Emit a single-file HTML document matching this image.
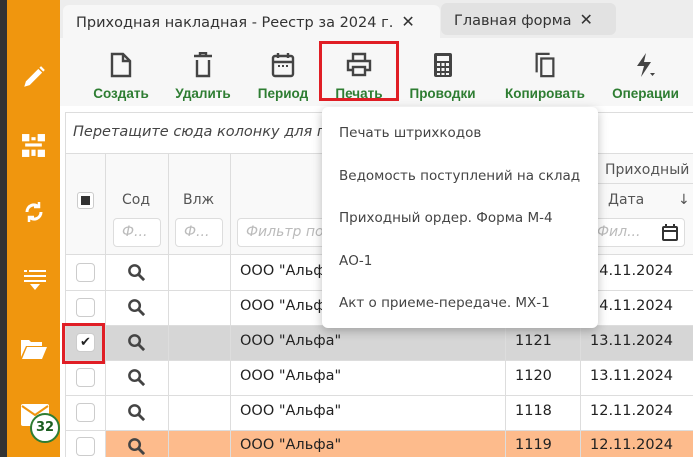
<!DOCTYPE html><html><head><meta charset="utf-8"><style>
*{box-sizing:border-box;margin:0;padding:0}
body{width:693px;height:457px;overflow:hidden;position:relative;font-family:"DejaVu Sans","Liberation Sans",sans-serif;background:#fff;color:#222}
.abs{position:absolute}
#dark{left:0;top:0;width:7px;height:457px;background:#333}
#side{left:7px;top:0;width:53px;height:457px;background:#f0960e}
#tabbar{left:60px;top:0;width:633px;height:38px;background:#ededed}
.tab{top:5px;height:33px;border-radius:6px 6px 0 0;font-size:14.5px;line-height:33px;padding-left:13px;color:#333;white-space:nowrap}
.x{font-weight:bold;font-size:16px;margin-left:8px}
.tb{top:52px;text-align:center;font-size:13.5px;color:#2e7d32;font-weight:bold;font-family:"Liberation Sans",sans-serif;white-space:nowrap}
.tb svg{display:block;margin:0 auto 8px;height:26px}
.grid{left:65px;top:112px;width:628px;height:345px;border-left:1px solid #ddd;border-top:1px solid #ddd}
.vl{width:1px;background:#ddd}
.hl{height:1px;background:#ddd}
.cb{width:19px;height:19px;border:1px solid #ccc;border-radius:4px;background:#fff}
.cell{font-size:14.5px;white-space:nowrap}
.hd{font-size:14px;color:#555}
.fi{height:29px;border:1px solid #ddd;border-radius:4px;font-style:italic;color:#bbb;font-size:14px;line-height:27px;padding-left:8px;background:#fff;white-space:nowrap;overflow:hidden}
#menu{left:322px;top:107px;width:276px;height:221px;background:#fff;border-radius:6px;box-shadow:0 3px 10px rgba(0,0,0,.25)}
.mi{left:17px;font-size:13.5px;color:#444;white-space:nowrap}
</style></head><body>
<div id="dark" class="abs"></div>
<div id="side" class="abs">
<svg class="abs" style="left:14px;top:64px" width="26" height="26" viewBox="0 0 24 24"><path d="M3 21l1.5-5L16 4.5l3.5 3.5L8 19.5z M17 3.5l1.5-1.5 3.5 3.5-1.5 1.5z" fill="#fff"/></svg>
<svg class="abs" style="left:14px;top:133px" width="25" height="25" viewBox="0 0 24 24" fill="#fff"><rect x="1" y="1" width="7" height="7"/><rect x="16" y="1" width="7" height="7"/><rect x="1" y="16" width="7" height="7"/><rect x="16" y="16" width="7" height="7"/><rect x="10" y="4" width="4" height="3"/><rect x="4" y="10" width="16" height="3"/><rect x="10" y="16" width="4" height="6"/></svg>
<svg class="abs" style="left:15px;top:200px" width="24" height="24" viewBox="0 0 24 24" fill="none" stroke="#fff" stroke-width="3"><path d="M5 12a7 7 0 0 1 12-5M19 12a7 7 0 0 1-12 5"/><path d="M17 2v5h-5M7 22v-5h5" stroke-width="2.5"/></svg>
<svg class="abs" style="left:16px;top:267px" width="24" height="26" viewBox="0 0 24 24" fill="#fff"><rect x="1" y="2" width="3" height="2"/><rect x="6" y="2" width="17" height="2"/><rect x="1" y="7" width="22" height="2"/><rect x="1" y="12" width="22" height="2"/><path d="M7 16h10l-5 6z"/></svg>
<svg class="abs" style="left:13px;top:337px" width="28" height="24" viewBox="0 0 28 24" fill="#fff"><path d="M1 3h8l2 2h11v4H6L1 20z M7 10h20l-5 12H2z"/></svg>
<svg class="abs" style="left:14px;top:404px" width="28" height="22" viewBox="0 0 28 22" fill="#fff"><rect x="0" y="0" width="28" height="22" rx="2"/><path d="M1 2l13 9 13-9" stroke="#f0960e" stroke-width="2" fill="none"/></svg>
<div class="abs" style="left:23px;top:413px;width:30px;height:30px;border-radius:50%;background:#fff;border:2px solid #2e7d32;color:#1b5e20;font-weight:bold;font-size:13px;text-align:center;line-height:26px">32</div>
</div>
<div id="tabbar" class="abs"></div>
<div class="abs tab" style="left:63px;width:377px;background:#f7f7f7">Приходная накладная - Реестр за 2024 г.<span class="x">✕</span></div>
<div class="abs tab" style="left:441px;width:175px;background:#e2e2e2;top:3px;height:32px;border-radius:6px">Главная форма<span class="x">✕</span></div>
<div class="abs" style="left:60px;top:38px;width:633px;height:68px;background:#f7f7f7"></div>
<div class="abs tb" style="left:90px;width:62px"><svg width="22" height="26" viewBox="0 0 22 26" fill="none" stroke="#444" stroke-width="2.4"><path d="M2 2h11l7 7v15H2z M13 2v7h7"/></svg>Создать</div>
<div class="abs tb" style="left:168px;width:70px"><svg width="20" height="26" viewBox="0 0 20 26" fill="none" stroke="#444" stroke-width="2.4"><path d="M1 4h18M7 4V1h6v3M4 8v16h12V8"/></svg>Удалить</div>
<div class="abs tb" style="left:253px;width:60px"><svg width="24" height="26" viewBox="0 0 24 26" fill="none" stroke="#444" stroke-width="2.4"><rect x="2" y="4" width="20" height="20" rx="2"/><path d="M2 10h20M7 1v5M17 1v5"/><path d="M7 14h2M11 14h2M15 14h2" stroke-width="2"/></svg>Период</div>
<div class="abs tb" style="left:324px;width:70px"><svg width="26" height="26" viewBox="0 0 26 26" fill="none" stroke="#444" stroke-width="2.4"><path d="M7 8V2h12v6M7 18H2V9h22v9h-5"/><rect x="7" y="15" width="12" height="8"/></svg>Печать</div>
<div class="abs" style="left:319px;top:41px;width:80px;height:60px;border:3px solid #e01e25"></div>
<div class="abs tb" style="left:405px;width:75px"><svg width="20" height="26" viewBox="0 0 20 26"><rect x="1" y="1" width="18" height="24" rx="2" fill="#444"/><rect x="4" y="4" width="12" height="5" fill="#f7f7f7"/><g fill="#f7f7f7"><rect x="4" y="11" width="3" height="3"/><rect x="8.5" y="11" width="3" height="3"/><rect x="13" y="11" width="3" height="3"/><rect x="4" y="16" width="3" height="3"/><rect x="8.5" y="16" width="3" height="3"/><rect x="13" y="16" width="3" height="3"/><rect x="4" y="21" width="3" height="2"/><rect x="8.5" y="21" width="3" height="2"/><rect x="13" y="21" width="3" height="2"/></g></svg>Проводки</div>
<div class="abs tb" style="left:500px;width:90px"><svg width="24" height="26" viewBox="0 0 24 28" fill="none" stroke="#444" stroke-width="2.4"><path d="M3 22V2h14"/><rect x="8" y="7" width="13" height="19"/></svg>Копировать</div>
<div class="abs tb" style="left:603px;width:85px"><svg width="24" height="26" viewBox="0 0 24 26" fill="#444"><path d="M12 1L3 14h7l-3 11 10-15h-7z"/><path d="M16 21h5l-2.5 3z"/></svg>Операции</div>
<div class="grid abs"></div>
<div class="abs" style="left:66px;top:113px;width:627px;height:40px;background:#fff;font-style:italic;color:#444;font-size:14.5px;line-height:38px;padding-left:7px;white-space:nowrap">Перетащите сюда колонку для группировки</div>
<div class="abs hl" style="left:65px;top:153px;width:628px"></div>
<div class="abs" style="left:66px;top:154px;width:627px;height:100px;background:#f9f9f9"></div>
<div class="abs hl" style="left:65px;top:254px;width:628px"></div>
<div class="abs" style="left:585px;top:154px;width:108px;height:30px;border-bottom:1px solid #ddd;font-size:14px;color:#555;line-height:32px;padding-left:20px;white-space:nowrap">Приходный</div>
<div class="abs" style="left:66px;top:325px;width:627px;height:35px;background:#d6d6d6"></div>
<div class="abs" style="left:106px;top:430px;width:587px;height:27px;background:#fdbb8c"></div>
<div class="abs hl" style="left:65px;top:290px;width:628px"></div>
<div class="abs hl" style="left:65px;top:325px;width:628px"></div>
<div class="abs hl" style="left:65px;top:360px;width:628px"></div>
<div class="abs hl" style="left:65px;top:395px;width:628px"></div>
<div class="abs hl" style="left:65px;top:430px;width:628px"></div>
<div class="abs vl" style="left:105px;top:153px;height:304px"></div>
<div class="abs vl" style="left:168px;top:153px;height:304px"></div>
<div class="abs vl" style="left:230px;top:153px;height:304px"></div>
<div class="abs vl" style="left:505px;top:153px;height:304px"></div>
<div class="abs vl" style="left:580px;top:184px;height:273px"></div>
<div class="abs" style="left:77px;top:192px;width:17px;height:17px;border:1px solid #ccc;border-radius:3px;background:#fff"><div style="margin:3px;width:9px;height:9px;background:#333"></div></div>
<div class="abs hd" style="left:122px;top:192px">Сод</div>
<div class="abs hd" style="left:183px;top:192px">Влж</div>
<div class="abs hd" style="left:608px;top:192px">Дата</div>
<div class="abs hd" style="left:678px;top:192px">↓</div>
<div class="abs fi" style="left:113px;top:218px;width:48px">Ф...</div>
<div class="abs fi" style="left:175px;top:218px;width:48px">Ф...</div>
<div class="abs fi" style="left:237px;top:218px;width:260px">Фильтр по</div>
<div class="abs fi" style="left:588px;top:218px;width:97px">Фил...<svg style="position:absolute;right:6px;top:5px" width="16" height="17" viewBox="0 0 16 17" fill="none" stroke="#333" stroke-width="2"><rect x="1" y="3" width="14" height="13" rx="1"/><path d="M1 7h14M4 0v4M12 0v4"/></svg></div>
<div class="abs cb" style="left:76px;top:263px"></div>
<div class="abs cb" style="left:76px;top:298px"></div>
<div class="abs cb" style="left:76px;top:333px;font-size:13px;text-align:center;line-height:17px">✔</div>
<div class="abs cb" style="left:76px;top:368px"></div>
<div class="abs cb" style="left:76px;top:403px"></div>
<div class="abs cb" style="left:76px;top:437px"></div>
<div class="abs" style="left:62px;top:323px;width:43px;height:41px;border:3px solid #e01e25"></div>
<svg width="0" height="0"><defs><symbol id="mg" viewBox="0 0 20 20"><circle cx="8" cy="8" r="5.5" fill="none" stroke="#444" stroke-width="2.6"/><path d="M12 12l6 6" stroke="#444" stroke-width="3"/></symbol></defs></svg>
<svg class="abs" style="left:127px;top:263px" width="19" height="19"><use href="#mg"/></svg>
<svg class="abs" style="left:127px;top:298px" width="19" height="19"><use href="#mg"/></svg>
<svg class="abs" style="left:127px;top:333px" width="19" height="19"><use href="#mg"/></svg>
<svg class="abs" style="left:127px;top:368px" width="19" height="19"><use href="#mg"/></svg>
<svg class="abs" style="left:127px;top:403px" width="19" height="19"><use href="#mg"/></svg>
<svg class="abs" style="left:127px;top:437px" width="19" height="19"><use href="#mg"/></svg>
<div class="abs cell" style="left:240px;top:263px">ООО "Альфа"</div>
<div class="abs cell" style="left:240px;top:298px">ООО "Альфа"</div>
<div class="abs cell" style="left:240px;top:333px">ООО "Альфа"</div>
<div class="abs cell" style="left:240px;top:368px">ООО "Альфа"</div>
<div class="abs cell" style="left:240px;top:403px">ООО "Альфа"</div>
<div class="abs cell" style="left:240px;top:437px">ООО "Альфа"</div>
<div class="abs cell" style="left:590px;top:263px">14.11.2024</div>
<div class="abs cell" style="left:590px;top:298px">14.11.2024</div>
<div class="abs cell" style="left:515px;top:333px">1121</div><div class="abs cell" style="left:590px;top:333px">13.11.2024</div>
<div class="abs cell" style="left:515px;top:368px">1120</div><div class="abs cell" style="left:590px;top:368px">13.11.2024</div>
<div class="abs cell" style="left:515px;top:403px">1118</div><div class="abs cell" style="left:590px;top:403px">12.11.2024</div>
<div class="abs cell" style="left:515px;top:437px">1119</div><div class="abs cell" style="left:590px;top:437px">12.11.2024</div>
<div id="menu" class="abs">
<div class="abs mi" style="top:18px">Печать штрихкодов</div>
<div class="abs mi" style="top:61px">Ведомость поступлений на склад</div>
<div class="abs mi" style="top:103px">Приходный ордер. Форма М-4</div>
<div class="abs mi" style="top:146px">АО-1</div>
<div class="abs mi" style="top:188px">Акт о приеме-передаче. МХ-1</div>
</div>
</body></html>
